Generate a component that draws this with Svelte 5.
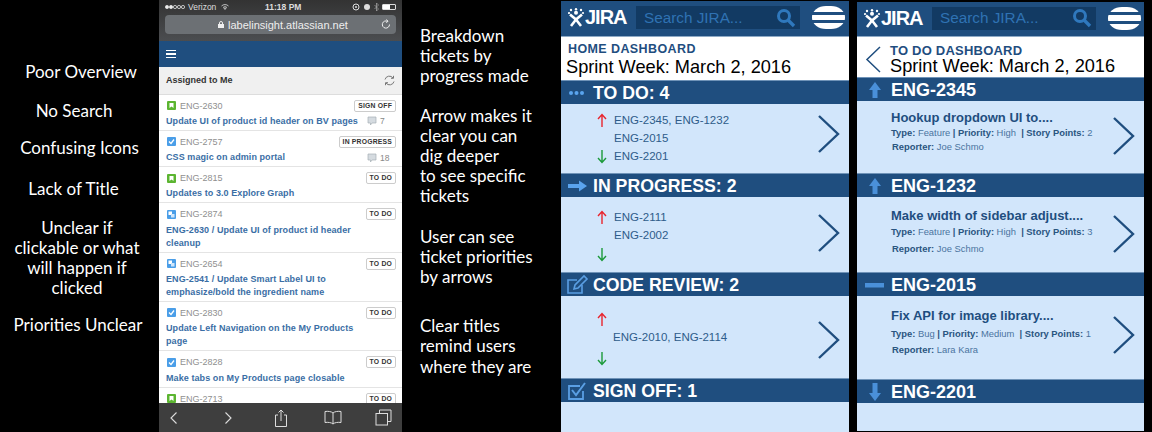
<script>
  const leftNotes = [
    { lines: ['Poor Overview'], mt: 62, ml: 6 },
    { lines: ['No Search'], mt: 19, ml: -8 },
    { lines: ['Confusing Icons'], mt: 17, ml: 3 },
    { lines: ['Lack of Title'], mt: 21, ml: -9 },
    { lines: ['Unclear if', 'clickable or what', 'will happen if', 'clicked'], mt: 19, ml: -2 },
    { lines: ['Priorities Unclear'], mt: 17, ml: 0 }
  ];
  const midNotes = [
    { lines: ['Breakdown', 'tickets by', 'progress made'], mt: 26 },
    { lines: ['Arrow makes it', 'clear you can', 'dig deeper', 'to see specific', 'tickets'], mt: 19 },
    { lines: ['User can see', 'ticket priorities', 'by arrows'], mt: 20 },
    { lines: ['Clear titles', 'remind users', 'where they are'], mt: 29 }
  ];
  const tickets = [
    { kind: 'story', key: 'ENG-2630', status: 'SIGN OFF', title: 'Update UI of product id header on BV pages', count: '7' },
    { kind: 'task', key: 'ENG-2757', status: 'IN PROGRESS', title: 'CSS magic on admin portal', count: '18' },
    { kind: 'story', key: 'ENG-2815', status: 'TO DO', title: 'Updates to 3.0 Explore Graph' },
    { kind: 'sub', key: 'ENG-2874', status: 'TO DO', title: 'ENG-2630 / Update UI of product id header cleanup' },
    { kind: 'sub', key: 'ENG-2654', status: 'TO DO', title: 'ENG-2541 / Update Smart Label UI to emphasize/bold the ingredient name' },
    { kind: 'task', key: 'ENG-2830', status: 'TO DO', title: 'Update Left Navigation on the My Products page' },
    { kind: 'task', key: 'ENG-2828', status: 'TO DO', title: 'Make tabs on My Products page closable' },
    { kind: 'story', key: 'ENG-2713', status: 'TO DO', title: '' }
  ];
  const homeSections = [
    { icon: 'dots', label: 'TO DO: 4', rows: ['ENG-2345, ENG-1232', 'ENG-2015', 'ENG-2201'], cls: 'a' },
    { icon: 'right', label: 'IN PROGRESS: 2', rows: ['ENG-2111', 'ENG-2002', ''], cls: 'b' },
    { icon: 'edit', label: 'CODE REVIEW: 2', rows: ['', 'ENG-2010, ENG-2114', ''], cls: 'c' }
  ];
  const details = [
    { icon: 'up', key: 'ENG-2345', title: 'Hookup dropdown UI to....', type: 'Feature', priority: 'High', pts: '2', reporter: 'Joe Schmo', cls: 'd1' },
    { icon: 'up', key: 'ENG-1232', title: 'Make width of sidebar adjust....', type: 'Feature', priority: 'High', pts: '3', reporter: 'Joe Schmo', cls: 'd2' },
    { icon: 'minus', key: 'ENG-2015', title: 'Fix API for image library....', type: 'Bug', priority: 'Medium', pts: '1', reporter: 'Lara Kara', cls: 'd3' }
  ];
</script>

{#snippet bandIcon(name)}
  <svg class="band-icon" width="24" height="24" viewBox="0 0 24 24">
    {#if name === 'dots'}
      <circle cx="6" cy="12" r="2" fill="#5aa4ee" /><circle cx="11.500" cy="12" r="2" fill="#5aa4ee" /><circle cx="17" cy="12" r="2" fill="#5aa4ee" />
    {:else if name === 'right'}
      <path d="M3 10h11V6.500l8 5.500-8 5.500V14H3z" fill="#5aa4ee" />
    {:else if name === 'edit'}
      <path d="M17 12v8H3V7h9" fill="none" stroke="#5a9fe4" stroke-width="1.600" />
      <path d="M9 16l1-4 9-9 3 3-9 9z" fill="none" stroke="#5a9fe4" stroke-width="1.600" />
    {:else if name === 'check'}
      <path d="M18 12v8H4V7h11" fill="none" stroke="#5a9fe4" stroke-width="1.800" />
      <path d="M7 11l4 5 9-12" fill="none" stroke="#5a9fe4" stroke-width="2" />
    {:else if name === 'up'}
      <path d="M12 4l6 8h-3.500v8h-5v-8H6z" fill="#4a90d9" />
    {:else if name === 'down'}
      <path d="M12 21l6-8h-3.500V3h-5v10H6z" fill="#4a90d9" />
    {:else if name === 'minus'}
      <rect x="2" y="10" width="19" height="4.500" fill="#4a90d9" />
    {/if}
  </svg>
{/snippet}

{#snippet chev()}
  <svg class="chev" width="23" height="40" viewBox="0 0 23 40"><path d="M2 2l19 18L2 38" fill="none" stroke="#1f4e7f" stroke-width="2.400" /></svg>
{/snippet}

{#snippet arrow(up)}
  <svg class="arr" width="10" height="15" viewBox="0 0 10 15">
    {#if up}
      <path d="M5 14V1.500M1 6l4-4.500L9 6" fill="none" stroke="#e8252e" stroke-width="1.400" />
    {:else}
      <path d="M5 1v12.500M1 9l4 4.500L9 9" fill="none" stroke="#1c9a3a" stroke-width="1.400" />
    {/if}
  </svg>
{/snippet}

{#snippet topbar()}
  <div class="topbar">
    <div class="logo">
      <svg width="17" height="19" viewBox="0 0 17 19">
        <g fill="#fff">
          <circle cx="3" cy="2" r="1.200" /><circle cx="8" cy="1.200" r="1.200" /><circle cx="13" cy="2" r="1.200" /><circle cx="1" cy="5" r="1.100" /><circle cx="15" cy="5" r="1.100" />
          <circle cx="8" cy="4.800" r="2" />
        </g>
        <path d="M2 6.500L8 11.500L14 6.500M8 11.500L3 18M8 11.500L13 18" fill="none" stroke="#fff" stroke-width="2.600" />
      </svg>
      <span>JIRA</span>
    </div>
    <div class="search">
      <span>Search JIRA...</span>
      <svg width="20" height="20" viewBox="0 0 20 20"><circle cx="8" cy="8" r="5.500" fill="none" stroke="#2f78bd" stroke-width="3" /><path d="M12 12l6 6" stroke="#2f78bd" stroke-width="3.400" /></svg>
    </div>
    <div class="burger"><i></i><i></i><i></i></div>
  </div>
{/snippet}

<div class="page">
  <div class="notes-left">
    {#each leftNotes as n}
      <p style="margin-top:{n.mt}px;margin-left:{n.ml}px">{#each n.lines as l}<span>{l}</span>{/each}</p>
    {/each}
  </div>

  <div class="phone">
    <div class="chrome">
      <div class="status">
        <span class="st-left">
          <span class="sig"><i class="on"></i><i class="on"></i><i></i><i></i><i></i></span>
          <span>Verizon</span>
          <svg class="wifi" width="8" height="6" viewBox="0 0 8 6"><path d="M0.500 2a5 5 0 0 1 7 0M2 3.500a3 3 0 0 1 4 0M4 5.500l-1-1a1.500 1.500 0 0 1 2 0z" fill="none" stroke="#ddd" stroke-width="0.800" /></svg>
        </span>
        <span class="st-time">11:18 PM</span>
        <span class="st-right">
          <svg width="8" height="8" viewBox="0 0 8 8"><circle cx="4" cy="4" r="3" fill="none" stroke="#ddd" /><circle cx="4" cy="4" r="1" fill="#ddd" /></svg>
          <svg width="8" height="8" viewBox="0 0 8 8"><circle cx="4" cy="4" r="3" fill="#ddd" /></svg>
          <svg width="5" height="8" viewBox="0 0 5 8"><path d="M0.500 2l4 4-2 2V0l2 2-4 4" fill="none" stroke="#aaa" stroke-width="0.700" /></svg>
          <span class="batt"><i></i></span>
        </span>
      </div>
      <div class="url">
        <svg width="6" height="7" viewBox="0 0 6 7"><path d="M1.500 3V2a1.500 1.500 0 0 1 3 0v1" fill="none" stroke="#eee" /><rect y="3" width="6" height="4" fill="#eee" /></svg>
        <span>labelinsight.atlassian.net</span>
        <svg class="reload" width="10" height="11" viewBox="0 0 10 11"><path d="M8.500 5.500a3.600 3.600 0 1 1-2-3.200M5.500 0.500l1.500 1.800-1.800 1.300" fill="none" stroke="#eee" stroke-width="1" /></svg>
      </div>
    </div>
    <div class="navbar"><div class="ham"><i></i><i></i><i></i></div></div>
    <div class="assigned">
      <b>Assigned to Me</b>
      <svg width="11" height="11" viewBox="0 0 11 11"><path d="M1 4.500a4.500 4.500 0 0 1 8-1.500M10 6.500a4.500 4.500 0 0 1-8 1.500M9.500 0.800V3.300H7M1.500 10.200V7.700H4" fill="none" stroke="#777" stroke-width="1" /></svg>
    </div>
    <div class="list">
      {#each tickets as t}
        <div class="row">
          <div class="row-top">
            <span class="type {t.kind}">
              {#if t.kind === 'story'}
                <svg width="9" height="9" viewBox="0 0 9 9"><path d="M2.500 2h4v5L4.500 5.500 2.500 7z" fill="#fff" /></svg>
              {:else if t.kind === 'task'}
                <svg width="9" height="9" viewBox="0 0 9 9"><path d="M2 4.500l2 2 3-4" fill="none" stroke="#fff" stroke-width="1.300" /></svg>
              {:else}
                <svg width="9" height="9" viewBox="0 0 9 9"><rect x="1.500" y="1.500" width="3.500" height="3.500" fill="#fff" /><rect x="4" y="4" width="3.500" height="3.500" fill="#cfe6fb" /></svg>
              {/if}
            </span>
            <span class="key">{t.key}</span>
            <span class="badge">{t.status}</span>
          </div>
          {#if t.title}
            <div class="row-bottom">
              <span class="ttl">{t.title}</span>
              {#if t.count}
                <span class="cnt">
                  <svg width="10" height="10" viewBox="0 0 10 10"><path d="M1 1h8v6H5L3.500 9V7H1z" fill="#d5dbe0" stroke="#a8b0b6" stroke-width="0.700" /></svg>
                  {t.count}
                </span>
              {/if}
            </div>
          {/if}
        </div>
      {/each}
    </div>
    <div class="toolbar">
      <svg width="10" height="14" viewBox="0 0 10 14"><path d="M7.500 1.500L2 7l5.500 5.500" fill="none" stroke="#ddd" stroke-width="1.100" /></svg>
      <svg class="t2" width="10" height="14" viewBox="0 0 10 14"><path d="M2.500 1.500L8 7l-5.500 5.500" fill="none" stroke="#ddd" stroke-width="1.100" /></svg>
      <svg class="t3" width="14" height="18" viewBox="0 0 14 18"><path d="M4 6H1.500v11.500h11V6H10M7 12V1M4.500 3.500L7 1l2.500 2.500" fill="none" stroke="#ddd" stroke-width="1" /></svg>
      <svg class="t4" width="18" height="15" viewBox="0 0 18 15"><path d="M9 3C7.500 1.500 4 1 1 1.500v11C4 12 7.500 12.500 9 14c1.500-1.500 5-2 8-1.500v-11C14 1 10.500 1.500 9 3zV14" fill="none" stroke="#ddd" stroke-width="1" /></svg>
      <svg class="t5" width="17" height="17" viewBox="0 0 17 17"><path d="M4.500 4V1h11.500v11.500h-3.500" fill="none" stroke="#ddd" stroke-width="1" /><rect x="1" y="4.500" width="11.500" height="11.500" fill="none" stroke="#ddd" stroke-width="1" /></svg>
    </div>
  </div>

  <div class="notes-mid">
    {#each midNotes as n}
      <p style="margin-top:{n.mt}px">{#each n.lines as l}<span>{l}</span>{/each}</p>
    {/each}
  </div>

  <div class="mock one">
    {@render topbar()}
    <div class="head">
      <div class="h-title">HOME DASHBOARD</div>
      <div class="h-sub">Sprint Week: March 2, 2016</div>
    </div>
    {#each homeSections as s}
      <div class="band">{@render bandIcon(s.icon)}<span>{s.label}</span></div>
      <div class="body {s.cls}">
        <div class="rows">
          {#each s.rows as r, i}
            <div class="r">
              <span class="ar">{#if i !== 1}{@render arrow(i === 0)}{/if}</span>
              <span>{r}</span>
            </div>
          {/each}
        </div>
        {@render chev()}
      </div>
    {/each}
    <div class="band">{@render bandIcon('check')}<span>SIGN OFF: 1</span></div>
    <div class="body rest"></div>
  </div>

  <div class="mock two">
    {@render topbar()}
    <div class="head withback">
      <svg class="back" width="16" height="27" viewBox="0 0 16 27"><path d="M15 1L2 13.500 15 26" fill="none" stroke="#1f4e7f" stroke-width="1.500" /></svg>
      <div>
        <div class="h-title">TO DO DASHBOARD</div>
        <div class="h-sub">Sprint Week: March 2, 2016</div>
      </div>
    </div>
    {#each details as d}
      <div class="band dband">{@render bandIcon(d.icon)}<span>{d.key}</span></div>
      <div class="body det {d.cls}">
        <div class="info">
          <div class="d-title">{d.title}</div>
          <div class="meta"><b>Type:</b> {d.type} <b>| Priority:</b> {d.priority} &nbsp;<b>| Story Points:</b> {d.pts}</div>
          <div class="meta rep"><b>Reporter:</b> {d.reporter}</div>
        </div>
        {@render chev()}
      </div>
    {/each}
    <div class="band dband">{@render bandIcon('down')}<span>ENG-2201</span></div>
    <div class="body rest"></div>
  </div>
</div>

<style>
  :global(body) { margin: 0; background: #000; }
  .page { width: 1152px; height: 432px; overflow: hidden; background: #000; display: flex; font-family: "Liberation Sans", Arial, sans-serif; }

  .notes-left, .notes-mid { color: #fff; font-family: Lato, sans-serif; font-size: 17px; line-height: 20px; flex: none; }
  .notes-left { width: 159px; text-align: center; box-sizing: border-box; padding-right: 3px; }
  .notes-mid { width: 159px; box-sizing: border-box; padding-left: 18px; line-height: 20.200px; }
  p { margin: 0; }
  p span { display: block; white-space: nowrap; }

  .phone { width: 243px; height: 432px; flex: none; background: #fff; display: flex; flex-direction: column; overflow: hidden; }
  .chrome { height: 41px; background: linear-gradient(#333, #4b4d50); flex: none; box-sizing: border-box; padding: 1px 6px 0; }
  .status { height: 12px; display: flex; align-items: center; justify-content: space-between; color: #ddd; font-size: 8.500px; position: relative; }
  .st-left { display: flex; align-items: center; }
  .sig { display: flex; gap: 0.600px; width: 23px; }
  .sig i { width: 3.500px; height: 3.500px; border-radius: 50%; border: 0.500px solid #ddd; box-sizing: border-box; }
  .sig i.on { background: #eee; }
  .wifi { margin-left: 5px; }
  .st-time { font-weight: 700; position: absolute; left: 100px; }
  .st-right { display: flex; align-items: center; gap: 3px; }
  .batt { width: 14px; height: 6px; border: 1px solid #ddd; box-sizing: border-box; display: flex; border-radius: 1px; }
  .batt i { width: 7px; background: #fff; }
  .url { margin-top: 2px; height: 19px; border-radius: 4px; background: #6c7074; display: flex; align-items: center; padding-left: 53px; gap: 4px; color: #eee; font-size: 11px; position: relative; width: 231px; box-sizing: border-box; }
  .reload { position: absolute; right: 5px; top: 4px; }
  .navbar { height: 26px; background: #1f4e7f; flex: none; display: flex; align-items: center; padding-left: 7px; }
  .ham { width: 10px; display: flex; flex-direction: column; gap: 2px; }
  .ham i { height: 1.300px; background: #fff; display: block; }
  .assigned { height: 27.500px; background: #f0f0f0; flex: none; box-sizing: border-box; border-bottom: 1px solid #ddd; display: flex; align-items: center; justify-content: space-between; padding: 0 7px; font-size: 9px; color: #333; }
  .list { flex: 1; min-height: 0; overflow: hidden; }
  .row { box-sizing: border-box; padding: 5px 6px 2px 7px; border-bottom: 1px solid #e4e4e4; }
  .row-top { display: flex; align-items: center; height: 12px; }
  .type { width: 9px; height: 9px; border-radius: 1px; margin-left: 1px; display: flex; }
  .story { background: #5cb531; }
  .task { background: #4a9ee8; }
  .sub { background: #4a9ee8; }
  .key { margin-left: 4px; font-size: 9px; color: #8f8f8f; }
  .badge { margin-left: auto; font-size: 6.800px; font-weight: 700; color: #333; border: 1px solid #ccc; border-radius: 2px; height: 10px; line-height: 10px; padding: 0 3px; letter-spacing: 0.200px; box-sizing: content-box; min-width: 22px; text-align: center; }
  .row-bottom { display: flex; margin-top: 3.300px; justify-content: space-between; }
  .ttl { width: 200px; font-size: 9px; line-height: 13px; color: #3a6ea5; font-weight: 700; letter-spacing: 0.080px; }
  .cnt { width: 29px; font-size: 8.500px; color: #888; display: flex; gap: 3px; align-items: center; white-space: nowrap; }
  .ttl:has(+ .cnt) { width: 201px; white-space: nowrap; }
  .toolbar { height: 29px; background: #3e3e3e; flex: none; display: flex; align-items: center; padding: 0 10px; }
  .t2 { margin-left: 44px; }
  .t3 { margin-left: 41px; }
  .t4 { margin-left: 36px; }
  .t5 { margin-left: 33px; }

  .mock { flex: none; height: 432px; box-sizing: border-box; display: flex; flex-direction: column; overflow: hidden; }
  .one { width: 288px; padding-top: 1px; }
  .two { width: 287px; margin-left: 8px; padding-top: 2px; padding-bottom: 1px; }
  .topbar { height: 36px; flex: none; background: #1f4e7f; display: flex; align-items: center; padding: 0 3px 2px 7px; box-sizing: border-box; border-bottom: 1px solid #8eaac6; }
  .two .topbar { height: 35px; }
  .logo { display: flex; align-items: center; width: 68px; color: #fff; font-weight: 700; font-size: 20px; letter-spacing: -1px; font-family: "Liberation Sans", sans-serif; }
  .search { width: 164px; height: 23px; flex: none; background: #123a63; color: #2f72b3; font-size: 15.300px; display: flex; align-items: center; justify-content: space-between; padding: 0 4px 0 8px; box-sizing: border-box; }
  .burger { width: 33px; height: 23px; margin-left: 12px; border-radius: 14px / 11px; overflow: hidden; display: flex; flex-direction: column; gap: 2.700px; flex: none; }
  .burger i { flex: 1; background: #fff; display: block; }

  .head { background: #fff; height: 43px; flex: none; box-sizing: border-box; padding: 5px 0 0 7px; }
  .head .h-title { font-size: 12.500px; font-weight: 700; color: #1f4e7f; letter-spacing: 0.400px; line-height: 14px; }
  .head .h-sub { font-size: 18.200px; line-height: 22px; color: #000; margin-left: -2px; white-space: nowrap; }
  .withback { height: 40px; display: flex; padding: 7px 0 0 8px; gap: 9px; }
  .withback .h-title { font-size: 13px; line-height: 13px; letter-spacing: 0.220px; }
  .withback .h-sub { margin-left: 0; line-height: 19px; }
  .back { margin-top: 2px; flex: none; }

  .band { height: 24px; flex: none; background: #1f4e7f; display: flex; align-items: center; color: #fff; font-size: 17.700px; font-weight: 700; box-sizing: border-box; border-top: 1px solid #6f93b8; padding: 1px 0 0 4px; gap: 4px; white-space: nowrap; }
  .dband { padding-left: 6px; font-size: 18px; }
  .band-icon { flex: none; }
  .body { background: #d2e6fb; flex: none; display: flex; justify-content: space-between; box-sizing: border-box; color: #2e5c8a; }
  .rest { flex: 1; min-height: 0; }
  .rows { font-size: 11.500px; padding-left: 36px; display: flex; flex-direction: column; }
  .r { display: flex; align-items: center; height: 18px; gap: 7px; white-space: nowrap; }
  .ar { width: 10px; height: 15px; flex: none; }
  .arr { display: block; }
  .a { height: 69px; }
  .b { height: 75px; }
  .c { height: 82px; }
  .a .rows { padding-top: 7px; }
  .b .rows { padding-top: 11px; }
  .b .r:nth-child(3) { margin-top: 1px; }
  .c .rows { padding-top: 14px; }
  .c .r { gap: 6px; }
  .c .r:nth-child(3) { margin-top: 3px; }
  .chev { flex: none; margin-right: 9px; }
  .a .chev { margin-top: 10px; }
  .b .chev { margin-top: 16px; }
  .c .chev { margin-top: 24px; }

  .det { padding-left: 34px; }
  .d-title { font-size: 13px; font-weight: 700; color: #1f4e7f; line-height: 17px; white-space: nowrap; }
  .meta { font-size: 9.400px; line-height: 14px; color: #4a74a0; white-space: nowrap; }
  .meta b { color: #2a5580; }
  .rep { margin-left: 1px; }
  .d1 { height: 72px; }
  .d2 { height: 75px; }
  .d3 { height: 83px; }
  .d1 .info { padding-top: 8px; }
  .d2 .info { padding-top: 9.500px; }
  .d2 .meta { margin-top: 1.500px; }
  .d2 .rep { margin-top: 3px; }
  .d3 .info { padding-top: 10.500px; }
  .d3 .meta { margin-top: 3.500px; }
  .d3 .rep { margin-top: 2px; }
  .d1 .chev { margin-top: 15px; }
  .d2 .chev { margin-top: 17px; }
  .d3 .chev { margin-top: 19px; }
</style>
